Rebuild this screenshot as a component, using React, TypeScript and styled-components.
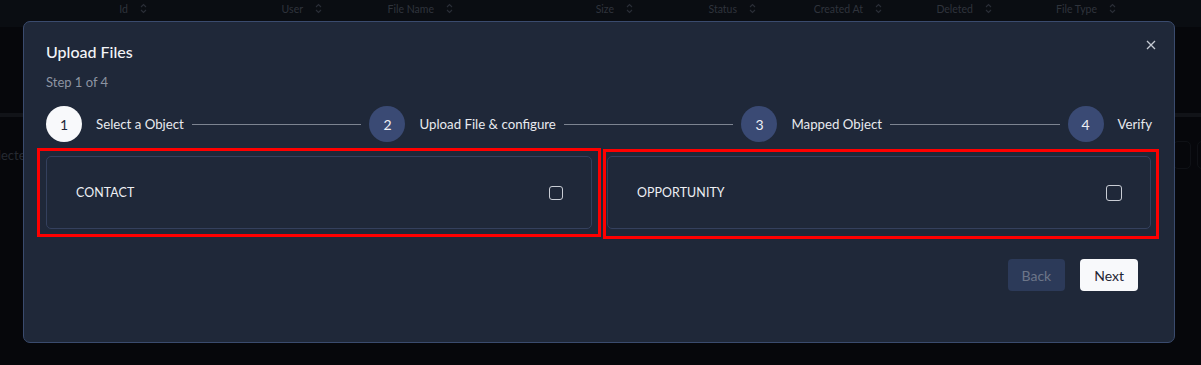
import React from "react";
import styled, { createGlobalStyle } from "styled-components";

const Global = createGlobalStyle`
  html, body { margin: 0; padding: 0; background: #08090d; }
  body { font-family: "Lato", "Noto Sans", sans-serif; overflow: hidden; }
  * { box-sizing: border-box; }
`;

const Page = styled.div`
  position: relative;
  width: 1201px;
  height: 365px;
  background: #08090d;
  overflow: hidden;
`;

const HeaderBar = styled.div`
  display: grid;
  grid-template-columns: 147px 175px 131px 180px 123px 126px 110px 124px 1fr;
  height: 27px;
  background: #0e1118;
  color: #474c57;
  font-size: 10.5px;
`;

const HeadCell = styled.div`
  display: flex;
  justify-content: flex-end;
  align-items: center;
  gap: 12px;
  height: 17px;
`;

const Body = styled.div`
  display: flex;
  flex-direction: column;
  padding-top: 86px;
`;

const Divider = styled.div`
  height: 4px;
  background: #191b21;
`;

const Row = styled.div`
  display: flex;
  justify-content: space-between;
  align-items: center;
  margin-top: 24px;
`;

const Faded = styled.div`
  margin-left: -16px;
  color: #3a3e48;
  font-size: 13px;
`;

const Chips = styled.div`
  display: flex;
  gap: 6px;
  margin-right: -14px;
`;

const Chip = styled.div`
  width: 18px;
  height: 28px;
  border: 1px solid #16181e;
  border-radius: 5px;
`;

const Overlay = styled.div`
  position: absolute;
  inset: 0;
  background: rgba(4, 5, 8, 0.35);
`;

const Modal = styled.div`
  position: absolute;
  left: 23px;
  top: 21px;
  width: 1152px;
  height: 322px;
  background: #1f2839;
  border: 1px solid #3a4b6e;
  border-radius: 7px;
  padding: 19px 22px 0 22px;
  display: flex;
  flex-direction: column;
  color: #eef0f4;
`;

const Close = styled.button`
  position: absolute;
  top: 15px;
  right: 15px;
  width: 16px;
  height: 16px;
  padding: 0;
  border: none;
  background: transparent;
  display: flex;
  align-items: center;
  justify-content: center;
`;

const Title = styled.h2`
  margin: 0;
  font-size: 16px;
  font-weight: 500;
  line-height: 21px;
  color: #f3f4f7;
`;

const StepText = styled.div`
  margin-top: 10px;
  font-size: 13px;
  line-height: 20px;
  color: #8d94a2;
`;

const Stepper = styled.div`
  margin-top: 14px;
  display: flex;
  align-items: center;
`;

const Circle = styled.div<{ $active?: boolean }>`
  width: 36px;
  height: 36px;
  border-radius: 50%;
  flex: none;
  display: flex;
  align-items: center;
  justify-content: center;
  font-size: 14px;
  background: ${(p) => (p.$active ? "#f8f9fb" : "#3a4a74")};
  color: ${(p) => (p.$active ? "#1f2839" : "#eef0f4")};
`;

const StepLabel = styled.span`
  margin-left: 14px;
  font-size: 13.25px;
  color: #e8eaef;
  white-space: nowrap;
`;

const Line = styled.div`
  flex: 1;
  height: 1px;
  margin: 0 8px;
  background: #7d8491;
`;

const Cards = styled.div`
  margin-top: 14px;
  display: grid;
  grid-template-columns: 546px 544px;
  column-gap: 15px;
`;

/* red annotation frame drawn over the card, as in the screenshot */
const Highlight = styled.div<{ $l: number; $t: number; $r: number; $b: number }>`
  position: relative;
  &::after {
    content: "";
    position: absolute;
    left: ${(p) => -p.$l}px;
    top: ${(p) => -p.$t}px;
    right: ${(p) => -p.$r}px;
    bottom: ${(p) => -p.$b}px;
    border: 3px solid #ff0000;
    pointer-events: none;
  }
`;

const Card = styled.label`
  height: 73px;
  border: 1px solid #34405d;
  border-radius: 5px;
  display: flex;
  align-items: center;
  justify-content: space-between;
  padding: 0 28px 0 29px;
  font-size: 12.4px;
  color: #eef0f4;
  letter-spacing: 0.1px;
`;

const Box = styled.span<{ $size: number }>`
  width: ${(p) => p.$size}px;
  height: ${(p) => p.$size}px;
  border: 1.5px solid #c9cdd5;
  border-radius: 3px;
`;

const Footer = styled.div`
  margin-top: 30px;
  padding-right: 14px;
  display: flex;
  justify-content: flex-end;
  gap: 15px;
`;

const Btn = styled.button<{ $primary?: boolean }>`
  height: 32px;
  padding: 0 14px;
  border: none;
  border-radius: 4px;
  font-family: inherit;
  font-size: 14px;
  background: ${(p) => (p.$primary ? "#f8f9fb" : "#2c3a59")};
  color: ${(p) => (p.$primary ? "#1f2533" : "#6d7689")};
`;

const Sort = () => (
  <svg width="7" height="11" viewBox="0 0 7 11" fill="none" stroke="#3f4450" strokeWidth="1.1">
    <path d="M1 4 L3.5 1.5 L6 4" />
    <path d="M1 7 L3.5 9.5 L6 7" />
  </svg>
);

const cols = ["Id", "User", "File Name", "Size", "Status", "Created At", "Deleted", "File Type"];

const steps = ["Select a Object", "Upload File & configure", "Mapped Object", "Verify"];

export default function App() {
  return (
    <Page>
      <Global />
      <HeaderBar>
        {cols.map((c) => (
          <HeadCell key={c}>
            <span>{c}</span>
            <Sort />
          </HeadCell>
        ))}
      </HeaderBar>
      <Body>
        <Divider />
        <Row>
          <Faded>Selected</Faded>
          <Chips>
            <Chip />
            <Chip />
          </Chips>
        </Row>
      </Body>
      <Overlay />
      <Modal>
        <Close aria-label="close">
          <svg width="10" height="10" viewBox="0 0 10 10" stroke="#c5cad3" strokeWidth="1.3">
            <path d="M1 1 L9 9 M9 1 L1 9" />
          </svg>
        </Close>
        <Title>Upload Files</Title>
        <StepText>Step 1 of 4</StepText>
        <Stepper>
          {steps.map((s, i) => (
            <React.Fragment key={s}>
              <Circle $active={i === 0}>{i + 1}</Circle>
              <StepLabel>{s}</StepLabel>
              {i < steps.length - 1 && <Line />}
            </React.Fragment>
          ))}
        </Stepper>
        <Cards>
          <Highlight $l={9} $t={8} $r={9} $b={8}>
            <Card>
              <span>CONTACT</span>
              <Box $size={14} />
            </Card>
          </Highlight>
          <Highlight $l={4} $t={7} $r={8} $b={10}>
            <Card>
              <span>OPPORTUNITY</span>
              <Box $size={16} />
            </Card>
          </Highlight>
        </Cards>
        <Footer>
          <Btn>Back</Btn>
          <Btn $primary>Next</Btn>
        </Footer>
      </Modal>
    </Page>
  );
}
